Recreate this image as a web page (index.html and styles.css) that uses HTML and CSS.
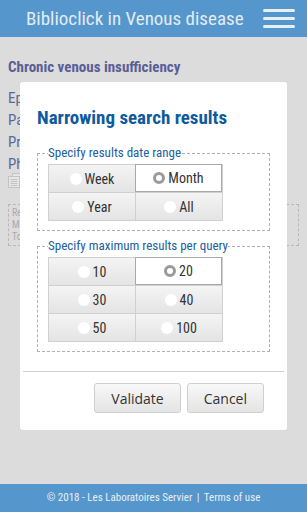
FILE: index.html
```html
<!DOCTYPE html>
<html>
	<head>
		<meta charset="utf-8"/>
		<title>Biblioclick in Venous disease</title>
		<link rel="stylesheet" href="styles.css">
	</head>
	<body>
		<div class="page">
			<div class="header">
				<span class="app-title">Biblioclick in Venous disease</span>
				<span class="menu-btn"><i></i><i></i><i></i></span>
			</div>
			<div class="content">
				<h1 class="topic">Chronic venous insufficiency</h1>
				<ul class="chapters">
					<li>Epidemiology</li>
					<li>Pathophysiology</li>
					<li>Prognosis</li>
					<li>Pharmacology</li>
				</ul>
				<div class="doc-icon">
					<svg width="16" height="15" viewBox="0 0 16 15"><rect x="4.5" y="0.5" width="11" height="11" fill="#e6e6e6" stroke="#c4c4c4"/><rect x="0.5" y="3.5" width="11" height="11" fill="#e6e6e6" stroke="#c4c4c4"/><path d="M2.5 6.5h7M2.5 8.5h7M2.5 10.5h7M2.5 12.5h7" stroke="#c4c4c4"/></svg>
				</div>
				<div class="note">
					<p>Results per query</p>
					<p>Month</p>
					<p>Total</p>
				</div>
			</div>
			<div class="footer">© 2018 - Les Laboratoires Servier <span class="sep">|</span> Terms of use</div>
		</div>

		<!-- 弹出层 -->
		<div class="dialog">
			<h2 class="dialog-title">Narrowing search results</h2>
			<fieldset>
				<legend>Specify results date range</legend>
				<div class="choices">
					<label class="choice"><span class="radio"></span>Week</label>
					<label class="choice checked"><span class="radio"></span>Month</label>
					<label class="choice"><span class="radio"></span>Year</label>
					<label class="choice"><span class="radio"></span>All</label>
				</div>
			</fieldset>
			<fieldset class="second">
				<legend>Specify maximum results per query</legend>
				<div class="choices">
					<label class="choice"><span class="radio"></span>10</label>
					<label class="choice checked"><span class="radio"></span>20</label>
					<label class="choice"><span class="radio"></span>30</label>
					<label class="choice"><span class="radio"></span>40</label>
					<label class="choice"><span class="radio"></span>50</label>
					<label class="choice"><span class="radio"></span>100</label>
				</div>
			</fieldset>
			<div class="dialog-foot">
				<button class="btn">Validate</button>
				<button class="btn">Cancel</button>
			</div>
		</div>
	</body>
</html>
```

FILE: styles.css
```css
/*去除默认样式*/
* {
	margin: 0;
	padding: 0;
	box-sizing: border-box;
}

ul li {
	list-style: none;
}

body {
	width: 307px;
	height: 512px;
	overflow: hidden;
	background-color: #dcdcdc;
	/*窄体*/
	font-family: "Roboto Condensed", Roboto, "Liberation Sans", sans-serif;
}

.page {
	height: 512px;
	display: flex;
	flex-direction: column;
}

/*顶部*/
.header {
	height: 37px;
	background-color: #5597cc;
	display: flex;
	align-items: center;
	padding: 0 12px 0 26px;
}

.app-title {
	flex: 1;
	font-size: 19px;
	color: #e3ebf3;
	white-space: nowrap;
}

.menu-btn {
	width: 32px;
	display: flex;
	flex-direction: column;
	gap: 5px;
}

.menu-btn i {
	display: block;
	height: 3px;
	border-radius: 2px;
	background-color: #e6eef6;
}

/*内容*/
.content {
	flex: 1;
	padding: 0 8px;
}

.topic {
	margin-top: 21px;
	font-size: 15px;
	font-weight: bold;
	color: #5a5e96;
}

.chapters {
	margin-top: 11px;
	font-size: 15px;
	color: #5a6898;
}

.chapters li {
	height: 22px;
	line-height: 22px;
}

.doc-icon {
	margin-top: -2px;
	height: 15px;
}

.note {
	margin-top: 16px;
	height: 42px;
	border: 1px dashed #b8b8b8;
	padding: 2px 3px;
	font-size: 10px;
	line-height: 12px;
	color: #aaa;
}

.footer {
	height: 28px;
	background-color: #5597cc;
	color: #e8eef5;
	font-size: 11px;
	text-align: center;
	line-height: 28px;
}

.sep {
	margin: 0 2px;
}

/*对话框 浮在页面上*/
.dialog {
	position: absolute;
	left: 20px;
	top: 82px;
	width: 267px;
	height: 348px;
	background-color: #fff;
	border-radius: 3px;
	padding: 0 17px;
}

.dialog-title {
	margin: 24px 0 16px;
	font-size: 19px;
	line-height: 24px;
	font-weight: bold;
	color: #0e5a9e;
}

fieldset {
	min-width: 0;
	border: 1px dashed #b0b0b0;
	padding: 4px 0 9px 10px;
}

fieldset.second {
	margin-top: 8px;
}

legend {
	font-size: 13px;
	line-height: 14px;
	color: #2060a0;
	white-space: nowrap;
}

.choices {
	width: 175px;
	display: grid;
	grid-template-columns: 87px 87px;
	border-right: 1px solid #d0d0d0;
	border-bottom: 1px solid #d0d0d0;
}

.choice {
	height: 28px;
	display: flex;
	align-items: center;
	justify-content: center;
	gap: 3px;
	border-top: 1px solid #d0d0d0;
	border-left: 1px solid #d0d0d0;
	background: linear-gradient(#f4f4f4, #e4e4e4);
	font-size: 14px;
	color: #333;
}

.choice.checked {
	background: #fff;
	border: 1px solid #a8a8a8;
}

.radio {
	width: 12px;
	height: 12px;
	border-radius: 50%;
	background-color: #fff;
}

.checked .radio {
	border: 3px solid #9a9a9a;
}

.dialog-foot {
	margin: 19px -14px 0;
	border-top: 1px solid #cfcfcf;
	padding: 11px 20px 0 6px;
	display: flex;
	justify-content: flex-end;
	gap: 6px;
}

.btn {
	height: 30px;
	padding: 0 16px;
	border: 1px solid #cfcfcf;
	border-radius: 3px;
	background: linear-gradient(#f8f8f8, #e4e4e4);
	font-family: "Open Sans", sans-serif;
	font-size: 14px;
	color: #333;
}
```
